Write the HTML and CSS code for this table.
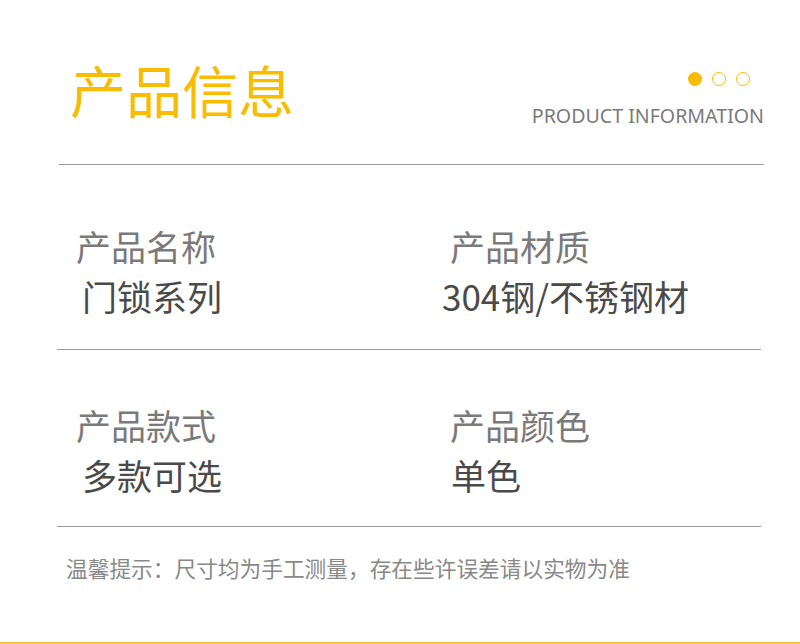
FILE: index.html
```html
<!DOCTYPE html>
<html lang="zh-CN">
<head>
<meta charset="utf-8">
<title>产品信息</title>
<link rel="stylesheet" href="styles.css">
</head>
<body>
<div class="page">
  <header class="head">
    <h1 class="title">产品信息</h1>
    <div class="head-right">
      <div class="dots"><span class="dot on"></span><span class="dot"></span><span class="dot"></span></div>
      <div class="en">PRODUCT INFORMATION</div>
    </div>
  </header>
  <div class="rule rule-top"></div>
  <section class="row row1">
    <div class="cell left"><div class="label">产品名称</div><div class="value">门锁系列</div></div>
    <div class="cell right"><div class="label">产品材质</div><div class="value value-num">304钢/不锈钢材</div></div>
  </section>
  <div class="rule"></div>
  <section class="row row2">
    <div class="cell left"><div class="label">产品款式</div><div class="value">多款可选</div></div>
    <div class="cell right"><div class="label">产品颜色</div><div class="value">单色</div></div>
  </section>
  <div class="rule"></div>
  <p class="note">温馨提示：尺寸均为手工测量，存在些许误差请以实物为准</p>
  <div class="bottom-bar"></div>
</div>
</body>
</html>
```

FILE: styles.css
```css
html, body {
  margin: 0;
  padding: 0;
  background: #ffffff;
}
.page {
  width: 800px;
  height: 644px;
  display: flex;
  flex-direction: column;
  font-family: "Noto Sans CJK SC", "Noto Sans", sans-serif;
  overflow: hidden;
}
.head {
  display: flex;
  justify-content: space-between;
  align-items: flex-start;
  height: 164px;
  padding: 0 36px 0 70px;
  box-sizing: border-box;
}
.title {
  margin: 61px 0 0 0;
  font-size: 56px;
  line-height: 1;
  font-weight: 400;
  color: #f9bc00;
}
.head-right {
  display: flex;
  flex-direction: column;
  align-items: flex-end;
  padding-top: 72px;
}
.dots {
  display: flex;
  gap: 10px;
  padding-right: 14px;
}
.dot {
  width: 14px;
  height: 14px;
  box-sizing: border-box;
  border-radius: 50%;
  border: 1.5px solid #f9bc00;
}
.dot.on {
  background: #f9bc00;
}
.en {
  margin-top: 20px;
  font-family: "Noto Sans", sans-serif;
  font-size: 19.6px;
  line-height: 1;
  color: #7a7a7a;
}
.rule {
  height: 1px;
  background: #9a9a9a;
  margin: 0 39px 0 57px;
}
.rule-top {
  margin: 0 36px 0 59px;
}
.row {
  display: grid;
  grid-template-columns: 374px 1fr;
  padding-left: 76px;
}
.row1 {
  padding-top: 63px;
  padding-bottom: 36px;
}
.row2 {
  padding-top: 57px;
  padding-bottom: 34px;
}
.label {
  font-size: 35px;
  line-height: 35px;
  color: #7a7a7a;
}
.value {
  margin-top: 15px;
  font-size: 35px;
  line-height: 35px;
  color: #4a4a4a;
}
.left .value {
  padding-left: 6px;
}
.right .value {
  padding-left: 1px;
}
.right .value-num {
  padding-left: 0;
  margin-left: -8px;
}
.note {
  margin: 30px 0 0 66px;
  font-size: 21.7px;
  line-height: 1;
  color: #888888;
}
.bottom-bar {
  margin-top: auto;
  height: 2px;
  background: #f6c445;
}
```
